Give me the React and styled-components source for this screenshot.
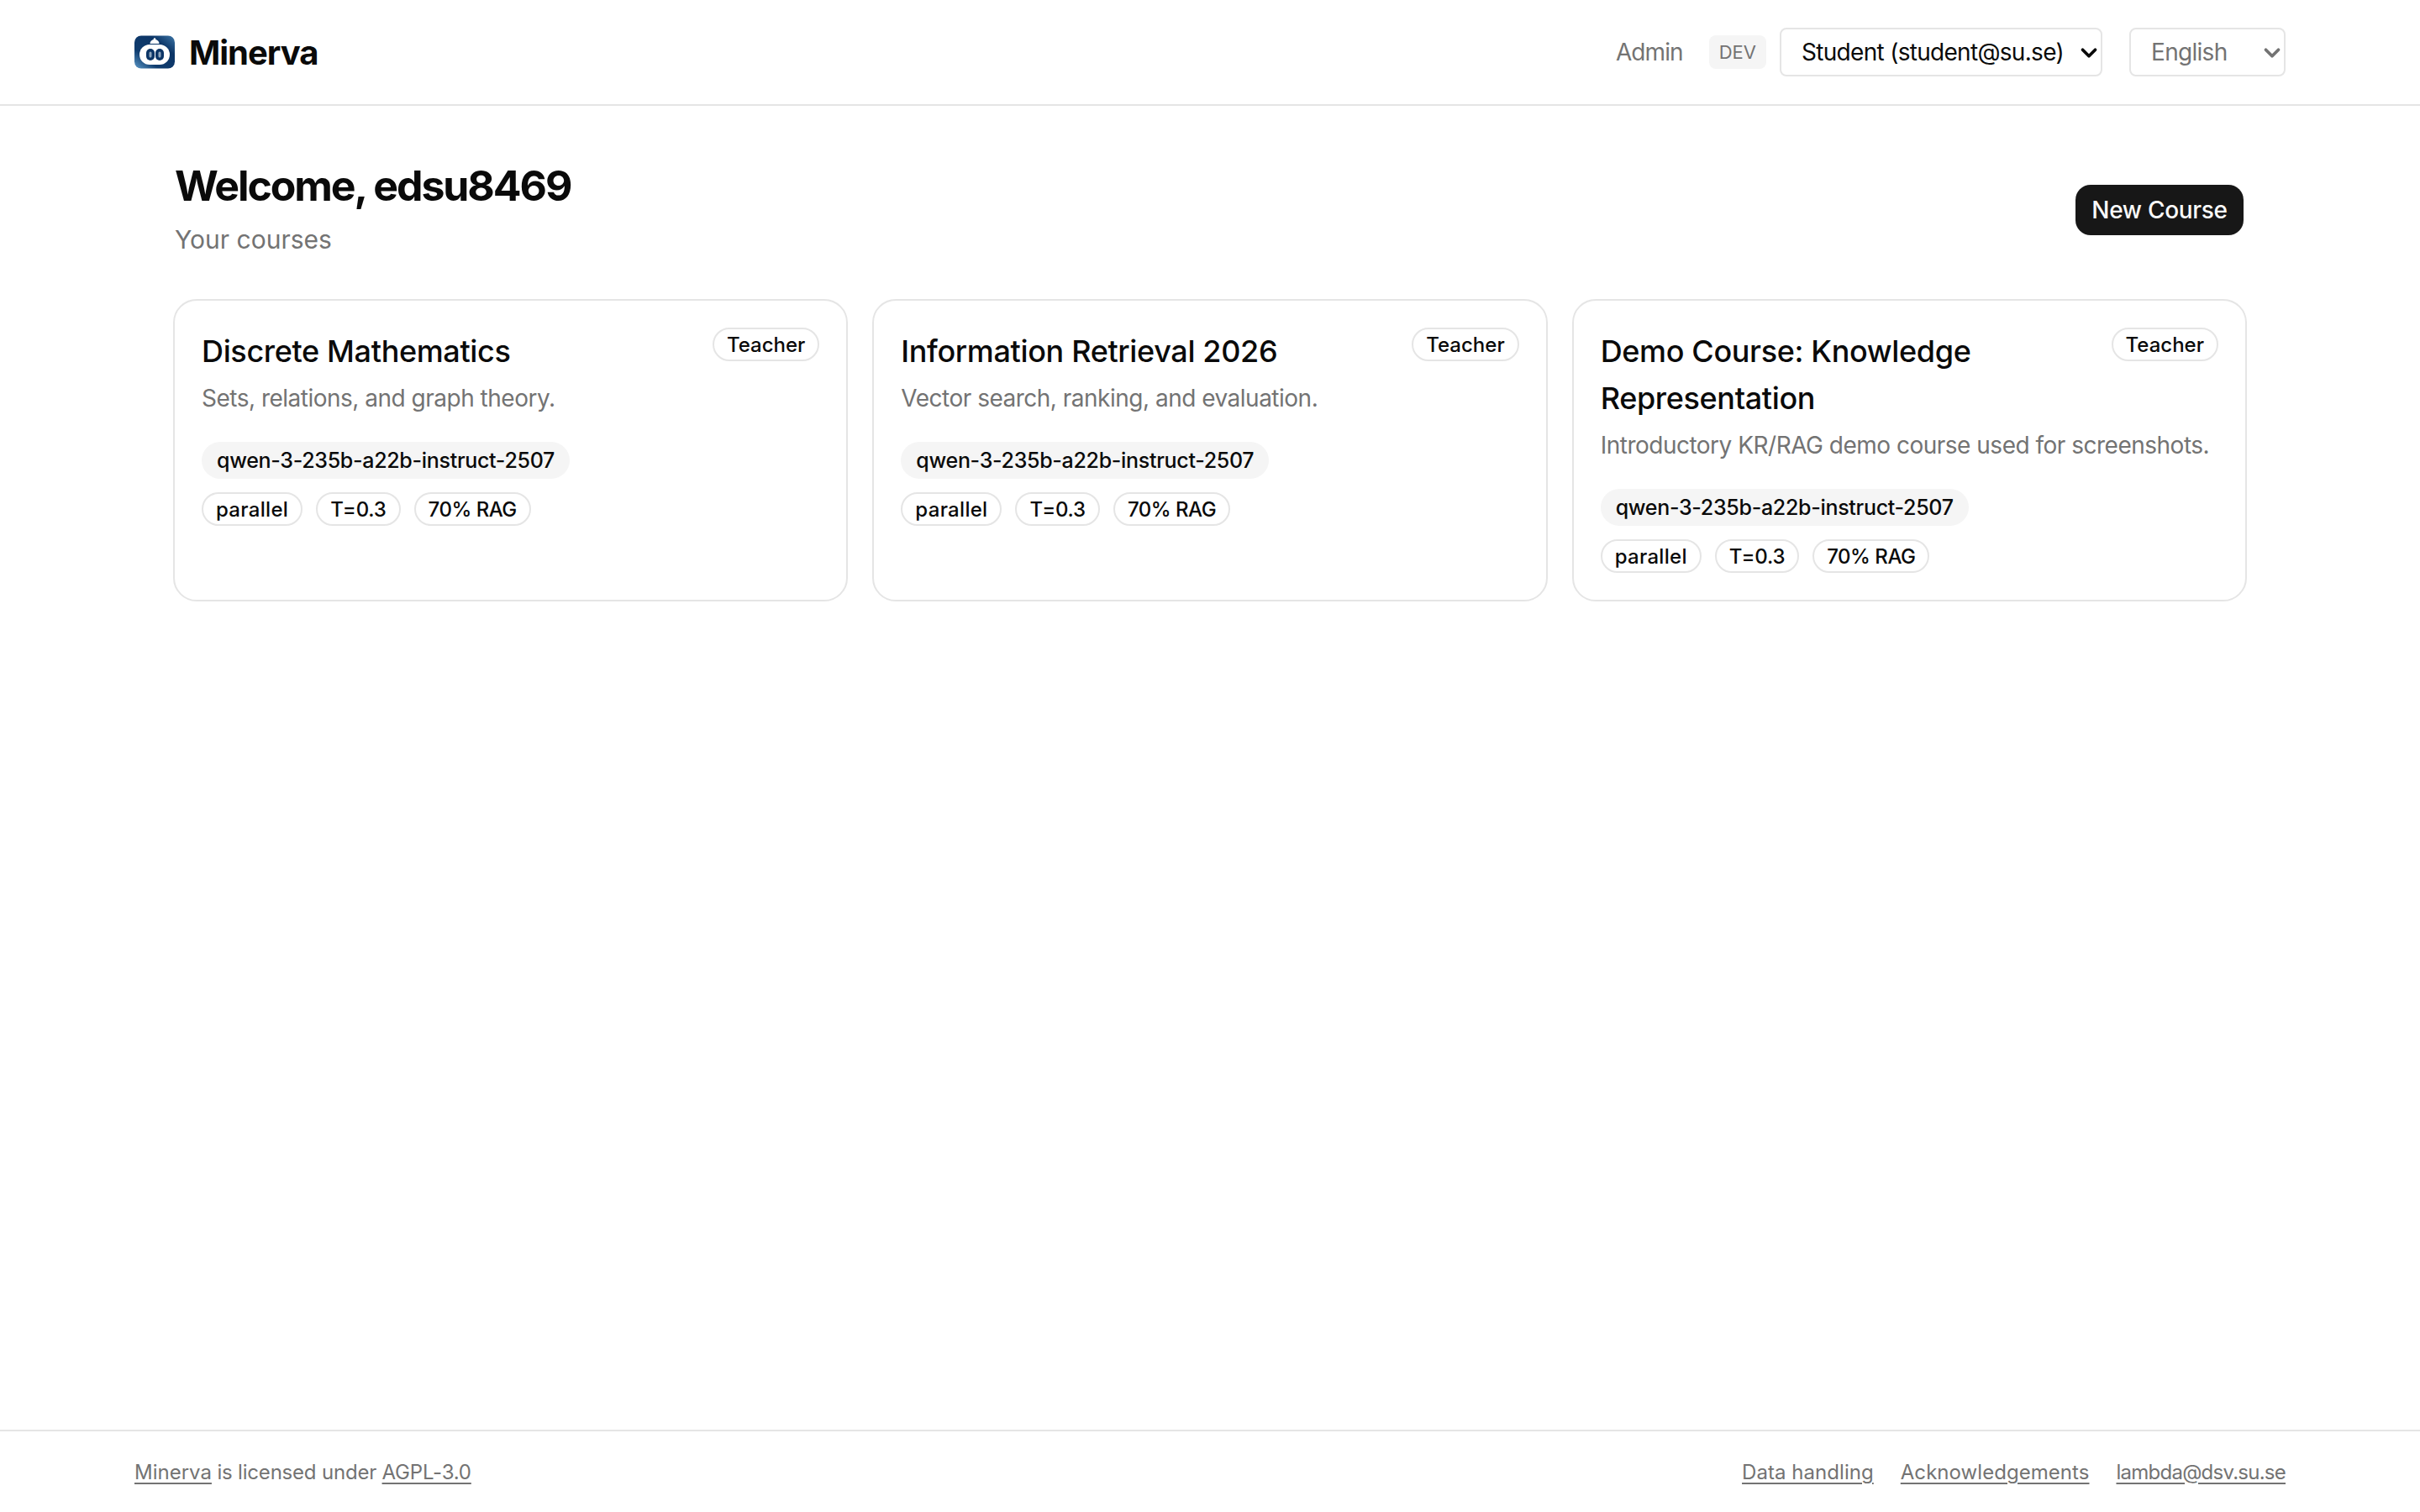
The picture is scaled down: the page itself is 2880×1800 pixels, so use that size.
import { createGlobalStyle, styled } from "styled-components";
import { ChevronDown } from "lucide-react";

const GlobalStyle = createGlobalStyle`
  * {
    box-sizing: border-box;
  }
  html, body {
    margin: 0;
    padding: 0;
    background: #fff;
    color: #0a0a0a;
    font-family: "Inter", "Liberation Sans", sans-serif;
  }
`;

const Page = styled.div`
  min-height: 100vh;
  display: flex;
  flex-direction: column;
`;

const Header = styled.header`
  height: 126px;
  flex-shrink: 0;
  display: flex;
  align-items: center;
  justify-content: space-between;
  padding: 0 160px;
  border-bottom: 2px solid #e5e5e5;
`;

const Brand = styled.div`
  display: flex;
  align-items: center;
  gap: 17px;
  font-size: 40px;
  font-weight: 700;
  letter-spacing: -1px;
`;

const HeaderNav = styled.nav`
  display: flex;
  align-items: center;
`;

const AdminLink = styled.a`
  font-size: 28px;
  letter-spacing: -0.9px;
  color: #737373;
  margin-right: 31px;
`;

const DevBadge = styled.span`
  height: 40px;
  padding: 0 12px;
  display: flex;
  align-items: center;
  background: #f5f5f5;
  border-radius: 8px;
  color: #737373;
  font-size: 22px;
  margin-right: 16px;
`;

const SelectWrap = styled.div`
  position: relative;
  width: ${(p) => p.$width}px;
  margin-left: ${(p) => p.$left || 0}px;
  color: ${(p) => p.$color};
  svg {
    position: absolute;
    right: 1px;
    top: 15px;
    pointer-events: none;
  }
`;

const Select = styled.select`
  appearance: none;
  width: 100%;
  height: 58px;
  padding: 0 24px;
  font: inherit;
  font-size: 28px;
  letter-spacing: -0.7px;
  color: inherit;
  background: #fff;
  border: 2px solid #e5e5e5;
  border-radius: 8px;
`;

const Main = styled.main`
  flex: 1;
  padding: 61px 206px 0;
`;

const TitleRow = styled.div`
  display: flex;
  align-items: center;
  justify-content: space-between;
  padding: 0 4px 0 2px;
  margin-bottom: 43px;
`;

const TitleBlock = styled.div`
  padding-bottom: 6px;
`;

const PageTitle = styled.h1`
  margin: 0 0 8px;
  font-size: 50px;
  line-height: 68px;
  font-weight: 700;
  letter-spacing: -2.1px;
`;

const Subtitle = styled.p`
  margin: 0;
  font-size: 30px;
  line-height: 44px;
  color: #737373;
`;

const NewCourse = styled.button`
  height: 60px;
  width: 200px;
  border: 0;
  border-radius: 18px;
  background: #171717;
  color: #fafafa;
  font: inherit;
  font-size: 28px;
  font-weight: 500;
  letter-spacing: -0.3px;
`;

const CourseGrid = styled.div`
  display: grid;
  grid-template-columns: repeat(3, minmax(0, 1fr));
  gap: 29px;
`;

const Card = styled.article`
  height: 360px;
  padding: 32px;
  border: 2px solid #e5e5e5;
  border-radius: 28px;
  background: #fff;
`;

const CardTop = styled.div`
  display: flex;
  justify-content: space-between;
  align-items: flex-start;
  gap: 16px;
`;

const CardTitle = styled.h2`
  margin: 0;
  font-size: 36px;
  line-height: 56px;
  font-weight: 500;
  letter-spacing: -0.35px;
`;

const CardDesc = styled.p`
  margin: 0 0 24px;
  font-size: 28px;
  line-height: 56px;
  letter-spacing: -0.5px;
  color: #737373;
  white-space: nowrap;
`;

const ChipRow = styled.div`
  display: flex;
  gap: 16px;
  margin-top: ${(p) => p.$top || 0}px;
`;

const ModelChip = styled.span`
  height: 44px;
  padding: 0 18px;
  display: inline-flex;
  align-items: center;
  background: #f5f5f5;
  border-radius: 22px;
  font-size: 25px;
  font-weight: 500;
  letter-spacing: -0.3px;
`;

const Pill = styled.span`
  height: 40px;
  padding: 0 15px;
  display: inline-flex;
  align-items: center;
  flex-shrink: 0;
  border: 2px solid #e5e5e5;
  border-radius: 20px;
  font-size: 24px;
  font-weight: 500;
  letter-spacing: ${(p) => p.$track ?? -0.2}px;
`;

const Footer = styled.footer`
  height: 98px;
  flex-shrink: 0;
  display: flex;
  align-items: center;
  justify-content: space-between;
  padding: 0 160px;
  border-top: 2px solid #e5e5e5;
  font-size: 24px;
  letter-spacing: -0.2px;
  color: #737373;
`;

const FooterLinks = styled.div`
  display: flex;
  gap: 32px;
`;

const FooterLink = styled.a`
  color: inherit;
  letter-spacing: ${(p) => p.$track ?? -0.2}px;
  text-decoration: underline;
  text-decoration-thickness: 2px;
  text-underline-offset: 4px;
`;

const Logo = () => (
  <svg width="48" height="40" viewBox="0 0 48 40" aria-hidden="true">
    <defs>
      <linearGradient id="logoBg" x1="0" y1="1" x2="1" y2="0">
        <stop offset="0" stopColor="#5d9ac9" />
        <stop offset="0.3" stopColor="#0f3c6e" />
        <stop offset="0.7" stopColor="#0c3566" />
        <stop offset="1" stopColor="#3e77a8" />
      </linearGradient>
    </defs>
    <rect width="48" height="39" y="0.5" rx="8" fill="url(#logoBg)" />
    <path d="M18.500 10a5.500 5 0 0 1 11 0z" fill="#fff" />
    <circle cx="24" cy="4.500" r="1.300" fill="#fff" />
    <rect x="6" y="11" width="36" height="24" rx="12" fill="#fff" />
    <rect x="14" y="16" width="10" height="14" rx="5" fill="#0c3566" />
    <rect x="25" y="16" width="10" height="14" rx="5" fill="#0c3566" />
    <rect x="17.500" y="19.500" width="3" height="7" rx="1.500" fill="#8fa6bd" />
    <rect x="28.500" y="19.500" width="3" height="7" rx="1.500" fill="#8fa6bd" />
  </svg>
);

const courses = [
  { title: "Discrete Mathematics", desc: "Sets, relations, and graph theory." },
  { title: "Information Retrieval 2026", desc: "Vector search, ranking, and evaluation." },
  {
    title: "Demo Course: Knowledge Representation",
    desc: "Introductory KR/RAG demo course used for screenshots.",
  },
];

const App = () => {
  return (
    <Page>
      <GlobalStyle />
      <Header>
        <Brand>
          <Logo />
          Minerva
        </Brand>
        <HeaderNav>
          <AdminLink>Admin</AdminLink>
          <DevBadge>DEV</DevBadge>
          <SelectWrap $width={384} $color="#0a0a0a">
            <Select defaultValue="student">
              <option value="student">Student (student@su.se)</option>
            </Select>
            <ChevronDown size={30} strokeWidth={3} />
          </SelectWrap>
          <SelectWrap $width={186} $left={32} $color="#737373">
            <Select defaultValue="en">
              <option value="en">English</option>
            </Select>
            <ChevronDown size={30} strokeWidth={3} />
          </SelectWrap>
        </HeaderNav>
      </Header>
      <Main>
        <TitleRow>
          <TitleBlock>
            <PageTitle>Welcome, edsu8469</PageTitle>
            <Subtitle>Your courses</Subtitle>
          </TitleBlock>
          <NewCourse>New Course</NewCourse>
        </TitleRow>
        <CourseGrid>
          {courses.map((course) => (
            <Card key={course.title}>
              <CardTop>
                <CardTitle>{course.title}</CardTitle>
                <Pill $track={0}>Teacher</Pill>
              </CardTop>
              <CardDesc>{course.desc}</CardDesc>
              <ChipRow>
                <ModelChip>qwen-3-235b-a22b-instruct-2507</ModelChip>
              </ChipRow>
              <ChipRow $top={16}>
                <Pill $track={0.3}>parallel</Pill>
                <Pill>T=0.3</Pill>
                <Pill $track={-0.5}>70% RAG</Pill>
              </ChipRow>
            </Card>
          ))}
        </CourseGrid>
      </Main>
      <Footer>
        <div>
          <FooterLink $track={0}>Minerva</FooterLink> is licensed under <FooterLink>AGPL-3.0</FooterLink>
        </div>
        <FooterLinks>
          <FooterLink $track={0.05}>Data handling</FooterLink>
          <FooterLink $track={0.05}>Acknowledgements</FooterLink>
          <FooterLink $track={-0.75}>lambda@dsv.su.se</FooterLink>
        </FooterLinks>
      </Footer>
    </Page>
  );
};

export default App;
